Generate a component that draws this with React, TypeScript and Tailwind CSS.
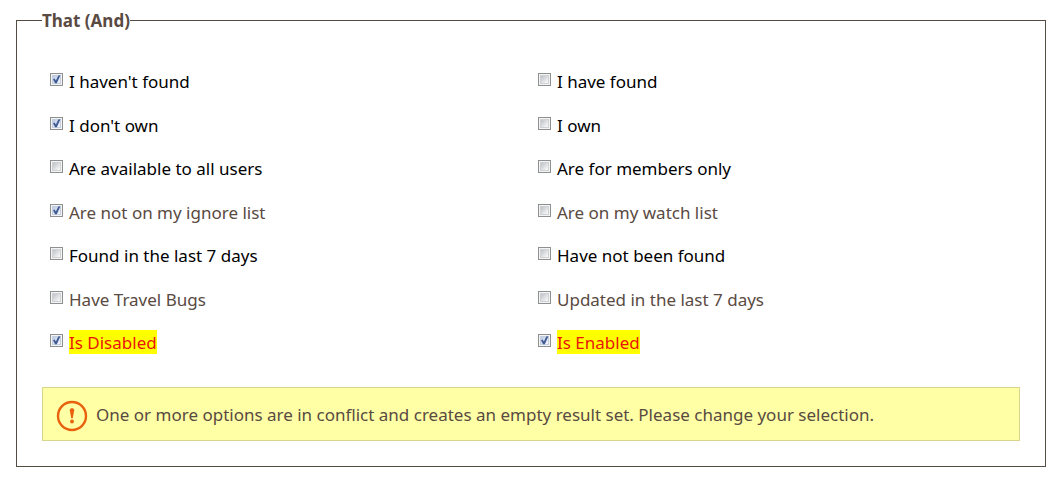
import React from "react";

type Tone = "normal" | "muted" | "conflict";

interface Option {
  id: string;
  label: string;
  checked?: boolean;
  tone?: Tone;
}

const options: Option[] = [
  { id: "not-found", label: "I haven't found", checked: true },
  { id: "found", label: "I have found" },
  { id: "not-own", label: "I don't own", checked: true },
  { id: "own", label: "I own" },
  { id: "all-users", label: "Are available to all users" },
  { id: "members", label: "Are for members only" },
  { id: "not-ignored", label: "Are not on my ignore list", checked: true, tone: "muted" },
  { id: "watch-list", label: "Are on my watch list", tone: "muted" },
  { id: "found-week", label: "Found in the last 7 days" },
  { id: "never-found", label: "Have not been found" },
  { id: "travel-bugs", label: "Have Travel Bugs", tone: "muted" },
  { id: "updated-week", label: "Updated in the last 7 days", tone: "muted" },
  { id: "disabled", label: "Is Disabled", checked: true, tone: "conflict" },
  { id: "enabled", label: "Is Enabled", checked: true, tone: "conflict" },
];

const toneClass: Record<Tone, string> = {
  normal: "text-black",
  muted: "text-[#594a42]",
  conflict: "bg-[#ffff00] text-[#e8150c]",
};

function OptionBox({ option }: { option: Option }) {
  return (
    <div className="flex items-start gap-1.5 pl-2">
      <span className="mt-1 grid size-[13px] shrink-0">
        <input
          id={option.id}
          type="checkbox"
          defaultChecked={option.checked}
          className="peer col-start-1 row-start-1 size-[13px] appearance-none border border-[#8e8f8f] bg-linear-to-br from-[#bfc3c8] from-20% to-[#fbfbfb] to-80% shadow-[inset_0_0_0_1px_#f4f4f4,inset_0_0_0_2px_#cfd1d4] checked:from-[#bccbe4] checked:to-[#f4f7fb] checked:shadow-[inset_0_0_0_1px_#f4f4f4,inset_0_0_0_2px_#c3cee0]"
        />
        <svg
          viewBox="0 0 13 13"
          aria-hidden="true"
          className="pointer-events-none invisible col-start-1 row-start-1 size-[13px] peer-checked:visible"
        >
          <path d="M3 6.2 4.6 5.4 5.9 7.4 8.3 2.5 10.4 2.2 6.8 10.3 5.1 10.3Z" fill="#405a94" />
        </svg>
      </span>
      <label
        htmlFor={option.id}
        className={`pt-0.5 leading-[22px] ${toneClass[option.tone ?? "normal"]}`}
      >
        {option.label}
      </label>
    </div>
  );
}

function WarningIcon() {
  return (
    <svg viewBox="0 0 32 32" aria-hidden="true" className="size-8 shrink-0">
      <circle cx="16" cy="16" r="14" fill="none" stroke="#e9600f" strokeWidth="2.4" />
      <path d="M13.8 10.2C13.8 7.7 18.2 7.7 18.2 10.2L16.8 18.3H15.2Z" fill="#e9600f" />
      <circle cx="16" cy="21.5" r="1.9" fill="#e9600f" />
    </svg>
  );
}

export default function App() {
  return (
    <main className="bg-white pt-2 pr-2.5 pb-3 pl-4 font-['Noto_Sans',sans-serif] text-[17px] text-[#594a42]">
      <fieldset className="border border-[#544c42] px-[25px] pb-[25px]">
        <legend className="pt-0.5 leading-[22px] font-bold">That (And)</legend>
        <div className="mt-[37px] grid min-h-[305px] auto-rows-fr grid-cols-2 pr-0.5">
          {options.map((option) => (
            <OptionBox key={option.id} option={option} />
          ))}
        </div>
        <div
          role="alert"
          className="mt-[13px] flex items-center gap-2 border border-[#d8d68c] bg-[#ffffa5] px-[13px] pt-3 pb-2"
        >
          <WarningIcon />
          <p className="pb-0.5 leading-6">
            One or more options are in conflict and creates an empty result set. Please change your selection.
          </p>
        </div>
      </fieldset>
    </main>
  );
}
